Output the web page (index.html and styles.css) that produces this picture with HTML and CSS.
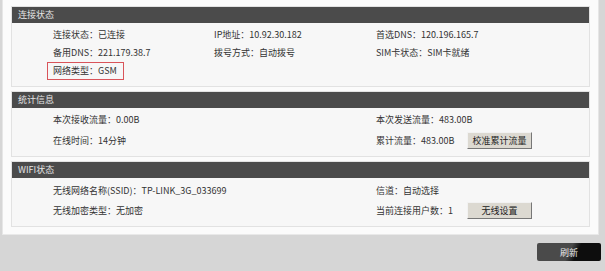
FILE: index.html
```html
<!DOCTYPE html>
<html lang="zh-CN">
<head>
    <meta charset="UTF-8">
    <title>运行状态</title>
    <link rel="stylesheet" href="styles.css">
</head>
<body>
    <div class="page">
        <div class="panel">
            <div class="panel-title">连接状态</div>
            <div class="panel-body">
                <div class="row">
                    <span>连接状态：已连接</span>
                    <span>IP地址：10.92.30.182</span>
                    <span>首选DNS：120.196.165.7</span>
                </div>
                <div class="row">
                    <span>备用DNS：221.179.38.7</span>
                    <span>拨号方式：自动拨号</span>
                    <span>SIM卡状态：SIM卡就绪</span>
                </div>
                <div class="row">
                    <span class="mark">网络类型：GSM</span>
                </div>
            </div>
        </div>

        <div class="panel">
            <div class="panel-title">统计信息</div>
            <div class="panel-body">
                <div class="row">
                    <span>本次接收流量：0.00B</span>
                    <span></span>
                    <span>本次发送流量：483.00B</span>
                </div>
                <div class="row btn-row">
                    <span>在线时间：14分钟</span>
                    <span></span>
                    <span class="with-btn"><span class="lbl">累计流量：483.00B</span><button class="btn">校准累计流量</button></span>
                </div>
            </div>
        </div>

        <div class="panel">
            <div class="panel-title">WIFI状态</div>
            <div class="panel-body third">
                <div class="row">
                    <span>无线网络名称(SSID)：TP-LINK_3G_033699</span>
                    <span>信道：自动选择</span>
                </div>
                <div class="row btn-row">
                    <span>无线加密类型：无加密</span>
                    <span class="with-btn"><span class="lbl">当前连接用户数：1</span><button class="btn">无线设置</button></span>
                </div>
            </div>
        </div>
    </div>

    <div class="footer">
        <button class="refresh">刷新</button>
    </div>
</body>
</html>
```

FILE: styles.css
```css
body {
    margin: 0;
    background-color: #d6d6d6;
    font-family: "Noto Sans CJK SC", "Liberation Sans", sans-serif;
    font-size: 9px;
    color: #333;
}
.page {
    margin-left: 2px;
    width: 579px;
    height: 228px;
    padding: 6px 8px 0 8px;
    background: #fbfbfb;
    border-left: 1px solid #e6e6e6;
    border-right: 1px solid #e6e6e6;
    border-bottom: 1px solid #e9e9e9;
}
.panel {
    border: 1px solid #e2e2e2;
    background: #f7f7f7;
    margin-bottom: 4px;
}
.panel-title {
    height: 16px;
    line-height: 16px;
    background: #4b4b4b;
    color: #e4e4e4;
    padding-left: 6px;
}
.panel-body {
    padding: 3px 0 6px 41px;
}
.panel-body.third {
    padding-top: 4px;
}
.row {
    display: grid;
    grid-template-columns: 161px 162px 1fr;
    height: 18px;
    line-height: 18px;
    white-space: nowrap;
}
.third .row {
    grid-template-columns: 323px 1fr;
}
.btn-row {
    margin-top: 3px;
}
.third .btn-row {
    margin-top: 2px;
}
.mark {
    display: inline-block;
    width: 61px;
    height: 16px;
    line-height: 16px;
    border: 1px solid #d9545a;
    margin-left: -6px;
    padding-left: 5px;
    padding-right: 9px;
}
.with-btn {
    display: flex;
    align-items: flex-start;
}
.lbl {
    width: 91px;
    flex: none;
}
.btn {
    width: 65px;
    height: 17px;
    padding: 0;
    font-family: inherit;
    font-size: 9px;
    color: #222;
    background: #dcd9d1;
    border: 1px solid;
    border-color: #f2f2f2 #777 #777 #f2f2f2;
    cursor: pointer;
}
.footer {
    display: flex;
    justify-content: flex-end;
    padding: 8px 4px 0 0;
}
.refresh {
    width: 64px;
    height: 18px;
    padding: 0;
    border: none;
    border-radius: 2px;
    font-family: inherit;
    font-size: 9px;
    color: #e8e8e8;
    background: linear-gradient(115deg, #4a4a4a 50%, #0d0d0d 62%);
    cursor: pointer;
}
```
